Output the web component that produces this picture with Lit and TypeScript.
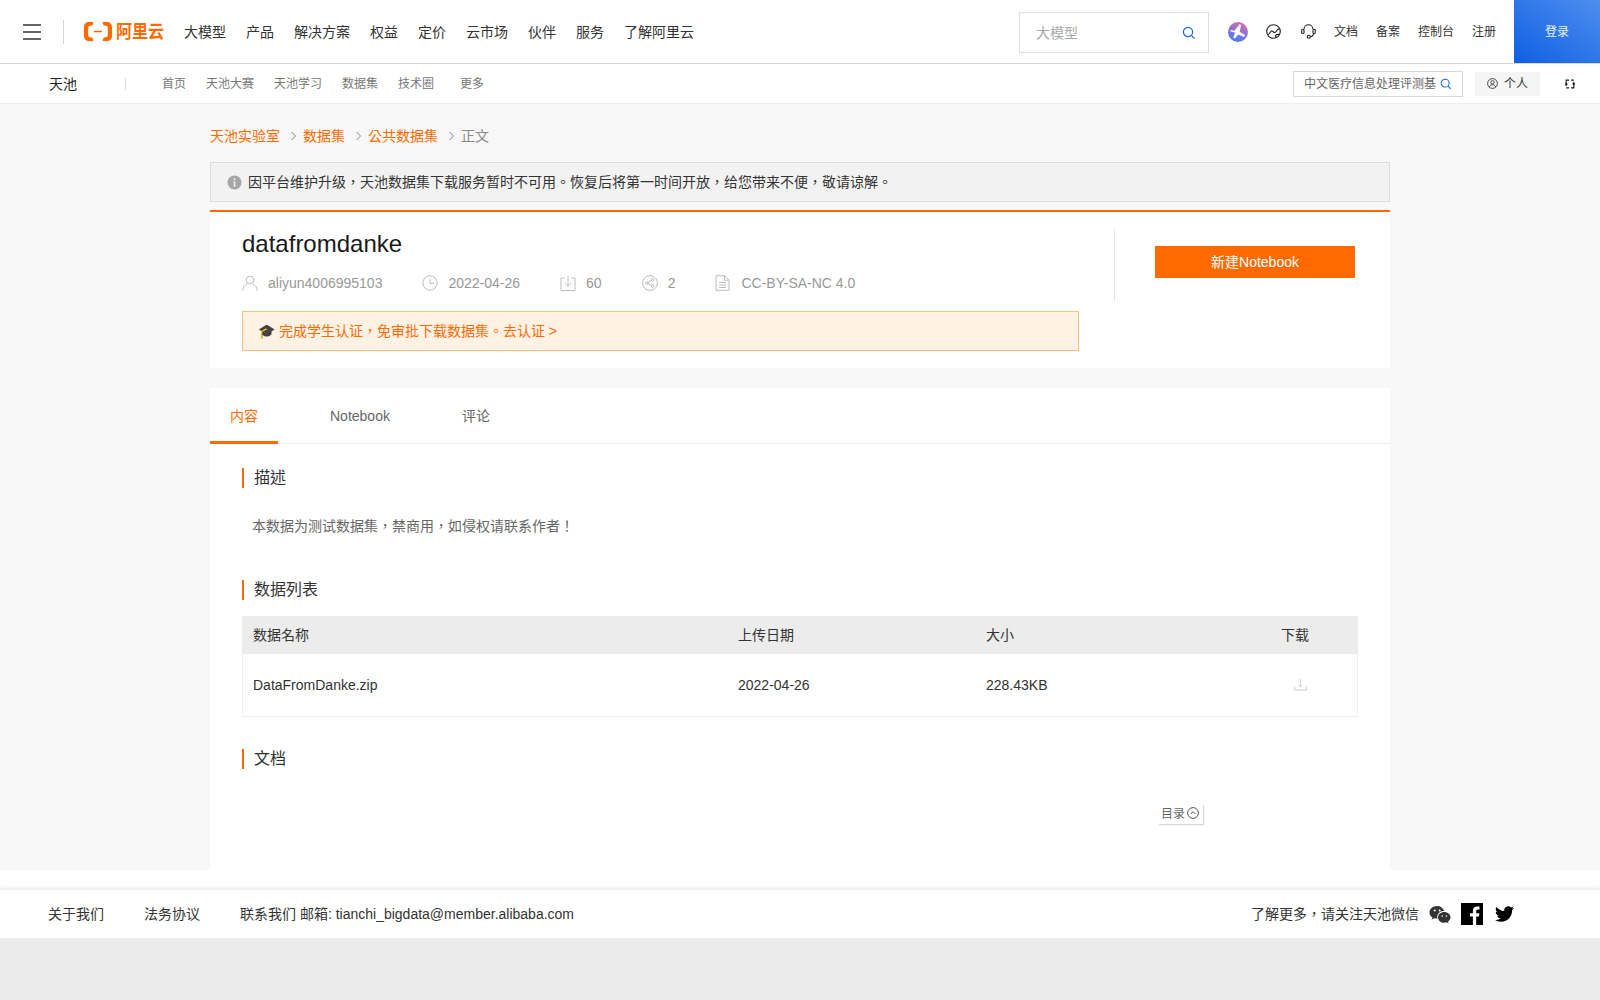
import { LitElement, html, css, svg } from "lit";
import { customElement } from "lit/decorators.js";

const searchIcon = (size: number) => html`<svg width=${size} height=${size} viewBox="0 0 14 14" fill="none" stroke="#1a66e6" stroke-width="1.2"><circle cx="6" cy="6" r="4.6"/><path d="M9.4 9.4l3.2 3.2"/></svg>`;

const metaIcons = {
  user: svg`<circle cx="8" cy="5" r="3.8"/><path d="M.6 16c.3-3.7 2.3-6 4.6-7M15.4 16c-.3-3.7-2.3-6-4.6-7"/>`,
  clock: svg`<circle cx="8" cy="8" r="7.2"/><path d="M8 3.8V8.4h4"/>`,
  download: svg`<path d="M4.4 3H1v12.5h14V3h-3.4M8 .8v10.4M4.8 8l3.2 3.2L11.2 8"/>`,
  share: svg`<circle cx="8" cy="8" r="7.4"/><circle cx="5" cy="8" r="1.3"/><circle cx="10.6" cy="5" r="1.3"/><circle cx="10.6" cy="11" r="1.3"/><path d="M6.2 7.4l3.2-1.8M6.2 8.6l3.2 1.8"/>`,
  doc: svg`<path d="M1 .7h8.6L14 5v10.3H1zM9.4.9v4.3H14M4 7.5h7M4 10h7M4 12.5h7"/>`,
};

@customElement("app-root")
export class AppRoot extends LitElement {
  static styles = css`
    :host {
      display: flex;
      flex-direction: column;
      min-height: 1000px;
      background: #fff;
      font-family: "Liberation Sans", "Noto Sans CJK TC", sans-serif;
      font-size: 14px;
      line-height: 20px;
      color: #333;
    }
    svg {
      display: block;
      flex: none;
    }
    .top {
      display: flex;
      align-items: center;
      height: 63px;
      border-bottom: 1px solid #d9d9d9;
    }
    .burger {
      margin-left: 23px;
      width: 18px;
      height: 16px;
      border-top: 2px solid #666;
      border-bottom: 2px solid #666;
      box-sizing: border-box;
      display: flex;
      align-items: center;
    }
    .burger i {
      display: block;
      width: 100%;
      height: 2px;
      background: #666;
    }
    .vline {
      margin-left: 22px;
      width: 1px;
      height: 24px;
      background: #d5d5d5;
    }
    .logo {
      display: flex;
      align-items: center;
      margin-left: 20px;
      gap: 4px;
      color: #ff6a00;
      font-size: 16px;
      font-weight: 700;
      width: 79px;
      white-space: nowrap;
    }
    .logo span {
      transform: scaleY(1.12);
    }
    .menu {
      display: flex;
      gap: 20px;
      margin-left: 21px;
      color: #333;
    }
    .top-right {
      margin-left: auto;
      display: flex;
      align-items: center;
    }
    .top-search {
      width: 190px;
      height: 41px;
      margin-top: 2px;
      box-sizing: border-box;
      border: 1px solid #ddd;
      display: flex;
      align-items: center;
      justify-content: space-between;
      padding: 0 12px 0 16px;
      color: #aaa;
    }
    .spark {
      margin-left: 19px;
    }
    .globe {
      margin-left: 18px;
    }
    .headset {
      margin-left: 20px;
    }
    .links {
      display: flex;
      gap: 18px;
      margin: 0 18px 0 18px;
      padding-top: 1px;
      font-size: 12px;
      color: #333;
    }
    .login {
      width: 86px;
      height: 63px;
      display: flex;
      align-items: center;
      justify-content: center;
      font-size: 12px;
      color: #e8f0ff;
      background: linear-gradient(35deg, #0f5fe3, #4e8eef);
    }
    .sub {
      display: flex;
      align-items: center;
      height: 39px;
      border-bottom: 1px solid #eee;
      padding-left: 49px;
    }
    .sub-name {
      color: #222;
      width: 76px;
    }
    .sub-line {
      width: 1px;
      height: 12px;
      background: #ddd;
    }
    .sub-links {
      display: flex;
      gap: 20px;
      margin-left: 36px;
      padding-top: 1px;
      font-size: 12px;
      color: #777;
    }
    .sub-links .more {
      margin-left: 6px;
    }
    .sub-right {
      margin-left: auto;
      display: flex;
      align-items: center;
      font-size: 12px;
    }
    .sub-search {
      width: 170px;
      height: 26px;
      box-sizing: border-box;
      border: 1px solid #d9d9d9;
      display: flex;
      align-items: center;
      padding: 0 0 0 10px;
      gap: 4px;
      color: #666;
    }
    .sub-search span {
      width: 132px;
      flex: none;
      overflow: hidden;
      white-space: nowrap;
      padding-top: 1px;
    }
    .personal {
      margin-left: 12px;
      width: 65px;
      height: 24px;
      background: #f5f5f5;
      display: flex;
      align-items: center;
      justify-content: center;
      gap: 6px;
      color: #333;
    }
    .personal span {
      padding-top: 1px;
    }
    .swap {
      margin: 0 25px 0 25px;
    }
    .page {
      background: #f8f8f8;
      padding-top: 22px;
    }
    .wrap {
      width: 1180px;
      margin-left: 210px;
    }
    .crumbs {
      display: flex;
      align-items: center;
      height: 20px;
      color: #ff6a00;
    }
    .crumbs svg {
      margin: 0 6px 0 10px;
    }
    .crumbs .now {
      color: #888;
    }
    .notice {
      margin-top: 16px;
      height: 40px;
      box-sizing: border-box;
      border: 1px solid #ddd;
      background: #f2f2f2;
      display: flex;
      align-items: center;
      gap: 6px;
      padding-left: 16px;
    }
    .head {
      margin-top: 8px;
      border-top: 2px solid #ff6a00;
      background: #fff;
      display: flex;
    }
    .head-main {
      width: 837px;
      padding: 16px 35px 17px 32px;
    }
    h1 {
      margin: 0;
      font-size: 24px;
      font-weight: 400;
      line-height: 32px;
      color: #1a1a1a;
    }
    .meta {
      display: flex;
      align-items: center;
      height: 20px;
      margin-top: 13px;
      color: #999;
    }
    .meta div {
      display: flex;
      align-items: center;
      gap: 10px;
      margin-right: 40px;
    }
    .meta svg {
      fill: none;
      stroke: #bdbdbd;
      stroke-width: 1;
    }
    .banner {
      margin-top: 18px;
      height: 40px;
      box-sizing: border-box;
      border: 1px solid #ffbf80;
      background: #fff2e5;
      color: #ff6a00;
      display: flex;
      align-items: center;
      padding-left: 15px;
    }
    .head-side {
      margin-top: 17px;
      height: 72px;
      box-sizing: border-box;
      border-left: 1px solid #e5e5e5;
      padding: 17px 0 0 40px;
    }
    .new-btn {
      width: 200px;
      height: 32px;
      background: #ff6a00;
      color: #fff;
      display: flex;
      align-items: center;
      justify-content: center;
    }
    .body {
      position: relative;
      margin-top: 20px;
      height: 482px;
      background: #fff;
    }
    .tabs {
      display: flex;
      height: 56px;
      box-sizing: border-box;
      border-bottom: 1px solid #eee;
      color: #666;
    }
    .tab {
      padding: 0 20px;
      margin-right: 32px;
      height: 56px;
      box-sizing: border-box;
      display: flex;
      align-items: center;
    }
    .tab.on {
      color: #ff6a00;
      border-bottom: 3px solid #ff6a00;
      padding-top: 3px;
    }
    .content {
      padding: 24px 32px 0;
    }
    h2 {
      margin: 0;
      height: 20px;
      line-height: 20px;
      border-left: 2px solid #ff6a00;
      padding-left: 10px;
      font-size: 16px;
      font-weight: 400;
      color: #333;
    }
    .desc {
      margin: 28px 0 44px 10px;
      line-height: 20px;
      color: #666;
    }
    .table {
      margin-top: 16px;
      border: solid #eee;
      border-width: 0 1px 1px;
      margin-bottom: 32px;
    }
    .tr {
      display: grid;
      grid-template-columns: 485px 248px 295px 1fr;
      padding-left: 10px;
      align-items: center;
      height: 62px;
    }
    .tr.th {
      height: 38px;
      background: #ececec;
      margin: 0 -1px;
      padding-left: 11px;
    }
    .dl {
      margin-left: 13px;
    }
    .toc {
      position: absolute;
      left: 948px;
      top: 416px;
      width: 45px;
      height: 20px;
      display: flex;
      align-items: center;
      gap: 2px;
      padding-left: 3px;
      box-sizing: border-box;
      font-size: 12px;
      color: #666;
      background: #fff;
      box-shadow: 1px 1px 1px rgba(0, 0, 0, 0.16);
    }
    .toc svg {
      margin-top: -3px;
    }
    .foot {
      margin-top: 20px;
      height: 48px;
      display: flex;
      align-items: center;
      padding: 0 86px 0 48px;
      gap: 40px;
      white-space: nowrap;
      box-shadow: 0 -2px 4px rgba(0, 0, 0, 0.09);
      color: #333;
    }
    .foot-right {
      margin-left: auto;
      display: flex;
      align-items: center;
    }
    .foot-right .wx {
      margin-left: 10px;
    }
    .foot-right .fb {
      margin-left: 10px;
    }
    .foot-right .tw {
      margin-left: 12px;
    }
    .floor {
      flex: 1;
      background: #ebebeb;
    }
  `;

  private crumbArrow() {
    return html`<svg width="7" height="10" viewBox="0 0 7 10" fill="none" stroke="#888" stroke-width="1"><path d="M1.5 1l4 4-4 4"/></svg>`;
  }

  private metaItem(icon: unknown, text: string) {
    return html`<div><svg width="16" height="16" viewBox="0 0 16 16">${icon}</svg><span>${text}</span></div>`;
  }

  private title(text: string) {
    return html`<h2>${text}</h2>`;
  }

  render() {
    const menu = ["大模型", "产品", "解决方案", "权益", "定价", "云市场", "伙伴", "服务", "了解阿里云"];
    const subLinks = ["首页", "天池大赛", "天池学习", "数据集", "技术圈"];
    return html`
      <header class="top">
        <div class="burger"><i></i></div>
        <div class="vline"></div>
        <div class="logo">
          <svg width="28" height="19" viewBox="0 0 28 19" fill="#ff6a00">
            <path d="M9.5 0H5C2 0 0 2 0 5v9c0 3 2 5 5 5h4.500l-1-3.300-3-.7c-.8-.2-1.300-.9-1.300-1.700V5.700c0-.8.5-1.500 1.300-1.700l3-.7zM18.500 0H23c3 0 5 2 5 5v9c0 3-2 5-5 5h-4.500l1-3.300 3-.7c.8-.2 1.300-.9 1.300-1.700V5.700c0-.8-.5-1.500-1.300-1.700l-3-.7zM10 8.800h8v1.500h-8z"/>
          </svg>
          <span>阿里云</span>
        </div>
        <nav class="menu">${menu.map((m) => html`<span>${m}</span>`)}</nav>
        <div class="top-right">
          <div class="top-search"><span>大模型</span>${searchIcon(14)}</div>
          <svg class="spark" width="20" height="20" viewBox="0 0 20 20">
            <defs><linearGradient id="sp" x1="0.7" y1="0" x2="0.3" y2="1"><stop offset="0" stop-color="#d86bb0"/><stop offset="1" stop-color="#3f7cf7"/></linearGradient></defs>
            <circle cx="10" cy="10" r="10" fill="url(#sp)"/>
            <path d="M2.500 8l4 .8L11.500 2.300l1.700.7-1.600 6.700 5.600 3.600-1.200 1.700-5.600-2.500-3.600 4-1.600-.9 2-4.800-4.800-1.500z" fill="#fff"/>
          </svg>
          <svg class="globe" width="15" height="15" viewBox="0 0 15 15" fill="none" stroke="#222" stroke-width="1.100"><circle cx="7.500" cy="7.500" r="6.800"/><path d="M1.500 10.500c2 .5 2.500-3 4-3.500s2 2 3.500 1.500 1-3 4.500-4M10 13c-1-1.500 0-3 3.500-2.500"/></svg>
          <svg class="headset" width="15" height="15" viewBox="0 0 15 15" fill="none" stroke="#222" stroke-width="1.100"><path d="M3 5.300a4.500 4.500 0 019 0"/><rect x="0.700" y="5.300" width="2.300" height="4.200" rx="1.100"/><rect x="12" y="5.300" width="2.300" height="4.200" rx="1.100"/><path d="M12.500 9.500c0 2-1.300 3-3.300 3.300"/><circle cx="7.800" cy="12.800" r="1.500"/></svg>
          <div class="links"><span>文档</span><span>备案</span><span>控制台</span><span>注册</span></div>
          <div class="login">登录</div>
        </div>
      </header>

      <div class="sub">
        <div class="sub-name">天池</div>
        <div class="sub-line"></div>
        <div class="sub-links">
          ${subLinks.map((s) => html`<span>${s}</span>`)}
          <span class="more">更多</span>
        </div>
        <div class="sub-right">
          <div class="sub-search"><span>中文医疗信息处理评测基</span>${searchIcon(12)}</div>
          <div class="personal">
            <svg width="11" height="11" viewBox="0 0 11 11" fill="none" stroke="#333" stroke-width="0.900"><circle cx="5.500" cy="5.500" r="4.900"/><circle cx="5.500" cy="4.300" r="1.700"/><path d="M2.300 9c.5-1.500 1.700-2.200 3.200-2.200S8.200 7.500 8.700 9"/></svg>
            <span>个人</span>
          </div>
          <svg class="swap" width="10" height="10" viewBox="0 0 10 10" fill="none" stroke="#222" stroke-width="1.200"><path d="M4 1.200H1.200V6M0 4.700l1.200 1.500 1.200-1.500M6 8.800h2.800V4M7.600 5.300L8.800 3.800 10 5.300M6 1.200h2.800M4 8.800H1.200"/></svg>
        </div>
      </div>

      <main class="page">
        <div class="wrap">
          <div class="crumbs">
            <span>天池实验室</span>${this.crumbArrow()}
            <span>数据集</span>${this.crumbArrow()}
            <span>公共数据集</span>${this.crumbArrow()}
            <span class="now">正文</span>
          </div>
          <div class="notice">
            <svg width="15" height="15" viewBox="0 0 15 15"><circle cx="7.500" cy="7.500" r="7" fill="#a6a6a6"/><path d="M6.700 3.300h1.600v1.600H6.700zM6.700 6.300h1.600v5.400H6.700z" fill="#f2f2f2"/></svg>
            <span>因平台维护升级，天池数据集下载服务暂时不可用。恢复后将第一时间开放，给您带来不便，敬请谅解。</span>
          </div>
          <section class="head">
            <div class="head-main">
              <h1>datafromdanke</h1>
              <div class="meta">
                ${this.metaItem(metaIcons.user, "aliyun4006995103")}
                ${this.metaItem(metaIcons.clock, "2022-04-26")}
                ${this.metaItem(metaIcons.download, "60")}
                ${this.metaItem(metaIcons.share, "2")}
                ${this.metaItem(metaIcons.doc, "CC-BY-SA-NC 4.0")}
              </div>
              <div class="banner">🎓 完成学生认证，免审批下载数据集。去认证 &gt;</div>
            </div>
            <div class="head-side"><div class="new-btn">新建Notebook</div></div>
          </section>
          <section class="body">
            <div class="tabs">
              <div class="tab on">内容</div>
              <div class="tab">Notebook</div>
              <div class="tab">评论</div>
            </div>
            <div class="content">
              ${this.title("描述")}
              <p class="desc">本数据为测试数据集，禁商用，如侵权请联系作者！</p>
              ${this.title("数据列表")}
              <div class="table">
                <div class="tr th"><span>数据名称</span><span>上传日期</span><span>大小</span><span>下载</span></div>
                <div class="tr">
                  <span>DataFromDanke.zip</span><span>2022-04-26</span><span>228.43KB</span>
                  <svg class="dl" width="13" height="12" viewBox="0 0 13 12" fill="none" stroke="#ccc" stroke-width="1"><path d="M.6 7.500v3.500h11.800V7.500M6.500 0v7.500M4.800 6l1.700 1.700L8.200 6"/></svg>
                </div>
              </div>
              ${this.title("文档")}
            </div>
            <div class="toc">
              <span>目录</span>
              <svg width="12" height="12" viewBox="0 0 12 12" fill="none" stroke="#444" stroke-width="0.900"><circle cx="6" cy="6" r="5.400"/><path d="M3.700 7l2.300-2.300L8.300 7"/></svg>
            </div>
          </section>
        </div>
      </main>

      <footer class="foot">
        <span>关于我们</span>
        <span>法务协议</span>
        <span>联系我们 邮箱: tianchi_bigdata@member.alibaba.com</span>
        <div class="foot-right">
          <span>了解更多，请关注天池微信</span>
          <svg class="wx" width="22" height="19" viewBox="0 0 22 19" fill="#333">
            <path d="M8.300 1C3.900 1 .5 3.900.5 7.400c0 2 1.100 3.700 2.900 4.900l-.7 2.200 2.500-1.300c.9.200 1.700.4 2.600.4h.7a5.900 5.900 0 01-.3-1.700c0-3.300 2.900-6 6.500-6h.7C13.800 3 11.300 1 8.300 1z"/>
            <path d="M21.500 12.400c0-2.900-2.900-5.300-6.200-5.300-3.500 0-6.300 2.400-6.300 5.300s2.800 5.300 6.300 5.300c.7 0 1.500-.2 2.200-.4l2 1.100-.5-1.800c1.500-1.100 2.500-2.600 2.500-4.200z"/>
            <circle cx="5.700" cy="5.400" r="1" fill="#fff"/><circle cx="10.700" cy="5.400" r="1" fill="#fff"/><circle cx="13.200" cy="11" r=".8" fill="#fff"/><circle cx="17.400" cy="11" r=".8" fill="#fff"/>
          </svg>
          <svg class="fb" width="22" height="22" viewBox="0 0 22 22"><rect width="22" height="22" fill="#000"/><path d="M15.200 22v-8.500h2.800l.4-3.300h-3.200V8.100c0-1 .3-1.600 1.600-1.600h1.700V3.600c-.3 0-1.300-.1-2.400-.1-2.500 0-4.200 1.500-4.200 4.300v2.400H9.100v3.300h2.800V22z" fill="#fff"/></svg>
          <svg class="tw" width="19" height="16" viewBox="0 0 24 20" fill="#000"><path d="M23.953 2.570a10 10 0 01-2.825.775 4.958 4.958 0 002.163-2.723c-.951.555-2.005.959-3.127 1.184a4.920 4.920 0 00-8.384 4.482C7.690 6.095 4.067 4.130 1.640 1.162a4.822 4.822 0 00-.666 2.475c0 1.710.870 3.213 2.188 4.096a4.904 4.904 0 01-2.228-.616v.060a4.923 4.923 0 003.946 4.827 4.996 4.996 0 01-2.212.085 4.936 4.936 0 004.604 3.417 9.867 9.867 0 01-6.102 2.105c-.390 0-.779-.023-1.170-.067a13.995 13.995 0 007.557 2.209c9.053 0 13.998-7.496 13.998-13.985 0-.210 0-.420-.015-.630A9.935 9.935 0 0024 2.590z"/></svg>
        </div>
      </footer>
      <div class="floor"></div>
    `;
  }
}
